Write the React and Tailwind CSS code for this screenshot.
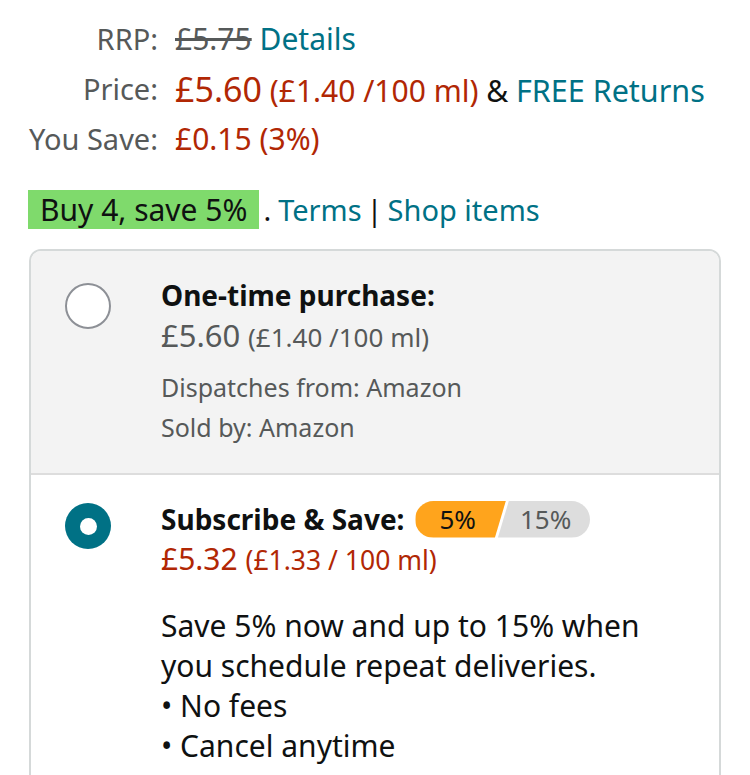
import React from "react";

const font = { fontFamily: "'Noto Sans', Roboto, sans-serif" };

function Radio({ checked }) {
    if (checked) {
        return (
            <div className="w-[46px] h-[46px] rounded-full bg-[#007185] flex items-center justify-center">
                <div className="w-[17px] h-[17px] rounded-full bg-white"></div>
            </div>
        );
    }
    return <div className="w-[46px] h-[46px] rounded-full bg-white border-2 border-[#8d9096]"></div>;
}

export default function App() {
    return (
        <div className="bg-white w-[750px] h-[775px] overflow-hidden text-[30px] text-[#0f1111]" style={font}>
            {/* Price table */}
            <div className="pt-[19px] pl-[28px] grid grid-cols-[130px_1fr] gap-x-[17px] leading-[40px]">
                <div className="text-right text-[#565959] text-[29px]">RRP:</div>
                <div>
                    <span className="text-[#565959] line-through">£5.75</span>{" "}
                    <span className="text-[#007185]">Details</span>
                </div>

                <div className="text-right text-[#565959] mt-[10px] text-[29px]">Price:</div>
                <div className="mt-[10px] whitespace-nowrap">
                    <span className="text-[#b12704] text-[34px]">£5.60</span>{" "}
                    <span className="text-[#b12704]">(£1.40 /100 ml)</span>{" "}
                    <span>&amp;</span>{" "}
                    <span className="text-[#007185] text-[30.5px]">FREE Returns</span>
                </div>

                <div className="text-right text-[#565959] mt-[8px] text-[29px]">You Save:</div>
                <div className="mt-[8px] text-[#b12704]">£0.15 (3%)</div>
            </div>

            {/* Promo */}
            <div className="mt-[31px] pl-[28px] flex items-center h-[39px]">
                <span className="bg-[#7fda6c] px-[12px] h-[39px] leading-[39px]">Buy 4, save 5%</span>
                <span className="flex items-center text-[29px]">
                    <span className="ml-[4px]">.</span>
                    <span className="ml-[7px] text-[#007185]">Terms</span>
                    <span className="mx-[5px]">|</span>
                    <span className="text-[#007185]">Shop items</span>
                </span>
            </div>

            {/* Options box */}
            <div className="mt-[20px] ml-[29px] w-[692px] border-2 border-[#d5d9d9] rounded-[12px] overflow-hidden">
                <div className="bg-[#f3f3f3] border-b-2 border-[#dddddd] h-[224px] flex pt-[32px] pl-[34px]">
                    <Radio checked={false} />
                    <div className="ml-[50px] -mt-[8px]">
                        <div className="font-bold leading-[40px] text-[28px]">One-time purchase:</div>
                        <div className="text-[#565959] leading-[40px]">
                            <span className="text-[31px]">£5.60</span> <span className="text-[26px]">(£1.40 /100 ml)</span>
                        </div>
                        <div className="text-[#565959] text-[25px] leading-[40px] mt-[10px]">Dispatches from: Amazon</div>
                        <div className="text-[#565959] text-[25px] leading-[40px]">Sold by: Amazon</div>
                    </div>
                </div>
                <div className="bg-white h-[320px] flex pt-[28px] pl-[34px]">
                    <Radio checked={true} />
                    <div className="ml-[50px] -mt-[4px]">
                        <div className="flex items-center h-[40px]">
                            <span className="font-bold text-[28px]">Subscribe &amp; Save:</span>
                            <span className="ml-[11px] flex h-[37px] text-[26px] leading-[37px]">
                                <span
                                    className="bg-[#ffa41c] pl-[24px] pr-[30px] rounded-l-full"
                                    style={{ clipPath: "polygon(0 0, 100% 0, calc(100% - 11px) 100%, 0 100%)" }}
                                >
                                    5%
                                </span>
                                <span
                                    className="bg-[#dddddd] text-[#565959] -ml-[8px] pl-[22px] pr-[19px] rounded-r-full"
                                    style={{ clipPath: "polygon(11px 0, 100% 0, 100% 100%, 0 100%)" }}
                                >
                                    15%
                                </span>
                            </span>
                        </div>
                        <div className="text-[#b12704] leading-[40px]">
                            <span className="text-[30px]">£5.32</span> <span className="text-[26.5px]">(£1.33 / 100 ml)</span>
                        </div>
                        <div className="mt-[26px] leading-[40px] w-[500px]">
                            <div>Save 5% now and up to 15% when you schedule repeat deliveries.</div>
                            <div>• No fees</div>
                            <div>• Cancel anytime</div>
                        </div>
                    </div>
                </div>
            </div>
        </div>
    );
}
